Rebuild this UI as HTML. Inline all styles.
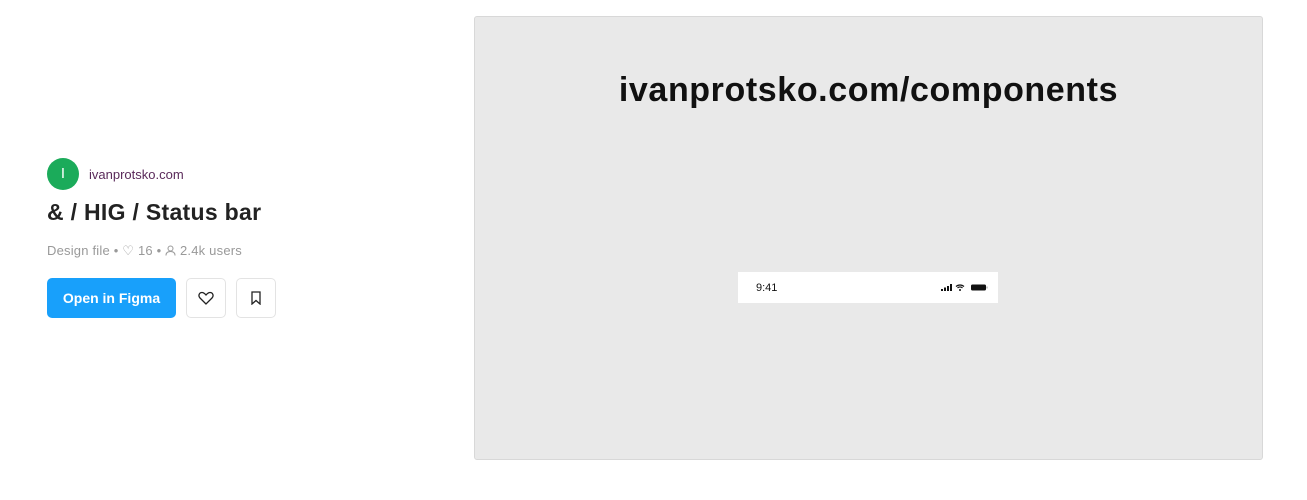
<!DOCTYPE html>
<html><head><style>
body{margin:0;width:1307px;height:500px;background:#fff;font-family:"Liberation Sans",sans-serif;position:relative;overflow:hidden}
.a{position:absolute}
</style></head><body>
<div class="a" style="left:47px;top:158px;width:32px;height:32px;border-radius:50%;background:#1bab5a;color:#fff;font-size:15px;line-height:32px;text-align:center">I</div>
<div class="a" style="left:89px;top:167px;font-size:13px;color:#5a2a5a">ivanprotsko.com</div>
<div class="a" style="left:47px;top:199px;font-size:23px;font-weight:bold;color:#222;letter-spacing:0.3px">&amp; / HIG / Status bar</div>
<div class="a" style="left:47px;top:243px;font-size:13px;color:#999;letter-spacing:0.2px">Design file • <span style="font-size:13px">♡</span> 16 • <svg width="11" height="11" viewBox="0 0 11 11" style="vertical-align:-1px"><circle cx="5.5" cy="3.5" r="2.5" fill="none" stroke="#999"/><path d="M1 10.5c0-3 2-4 4.5-4s4.5 1 4.5 4" fill="none" stroke="#999"/></svg> 2.4k users</div>
<div class="a" style="left:47px;top:278px;width:129px;height:40px;border-radius:5px;background:#18a0fb;color:#fff;font-weight:bold;font-size:14px;line-height:40px;text-align:center">Open in Figma</div>
<div class="a" style="left:186px;top:278px;width:38px;height:38px;border:1px solid #e3e3e3;border-radius:5px"><svg class="a" style="left:11px;top:12px" width="16" height="14" viewBox="0 0 16 14"><path d="M8 13L2 7C0 5 1 1.5 4 1.5c2 0 3 1.5 4 2.5 1-1 2-2.5 4-2.5 3 0 4 3.5 2 5.5z" fill="none" stroke="#222" stroke-width="1.3"/></svg></div>
<div class="a" style="left:236px;top:278px;width:38px;height:38px;border:1px solid #e3e3e3;border-radius:5px"><svg class="a" style="left:14px;top:12px" width="10" height="14" viewBox="0 0 10 14"><path d="M1 1h8v12L5 9.5 1 13z" fill="none" stroke="#222" stroke-width="1.3"/></svg></div>
<div class="a" style="left:474px;top:16px;width:787px;height:442px;background:#e9e9e9;border:1px solid #d8d8d8;border-radius:3px">
<div class="a" style="left:0;width:787px;top:54px;text-align:center;font-size:34px;font-weight:bold;color:#111;letter-spacing:0.6px">ivanprotsko.com/components</div>
<div class="a" style="left:263px;top:255px;width:260px;height:31px;background:#fff">
<div class="a" style="left:18px;top:10px;font-size:11px;color:#111">9:41</div>
<svg class="a" style="left:203px;top:11px" width="48" height="9" viewBox="0 0 48 9"><rect x="0" y="6" width="2" height="2" fill="#111"/><rect x="3" y="4.5" width="2" height="3.5" fill="#111"/><rect x="6" y="3" width="2" height="5" fill="#111"/><rect x="9" y="1" width="2" height="7" fill="#111"/><path d="M15 3.5a6 6 0 0 1 8 0M16.5 5a3.5 3.5 0 0 1 5 0" stroke="#111" fill="none" stroke-width="1.2"/><circle cx="19" cy="7" r="1" fill="#111"/><rect x="30" y="1.5" width="15" height="6" rx="1.5" fill="#111"/><rect x="45.5" y="3.5" width="1" height="2" fill="#999"/></svg>
</div></div>
</body></html>
